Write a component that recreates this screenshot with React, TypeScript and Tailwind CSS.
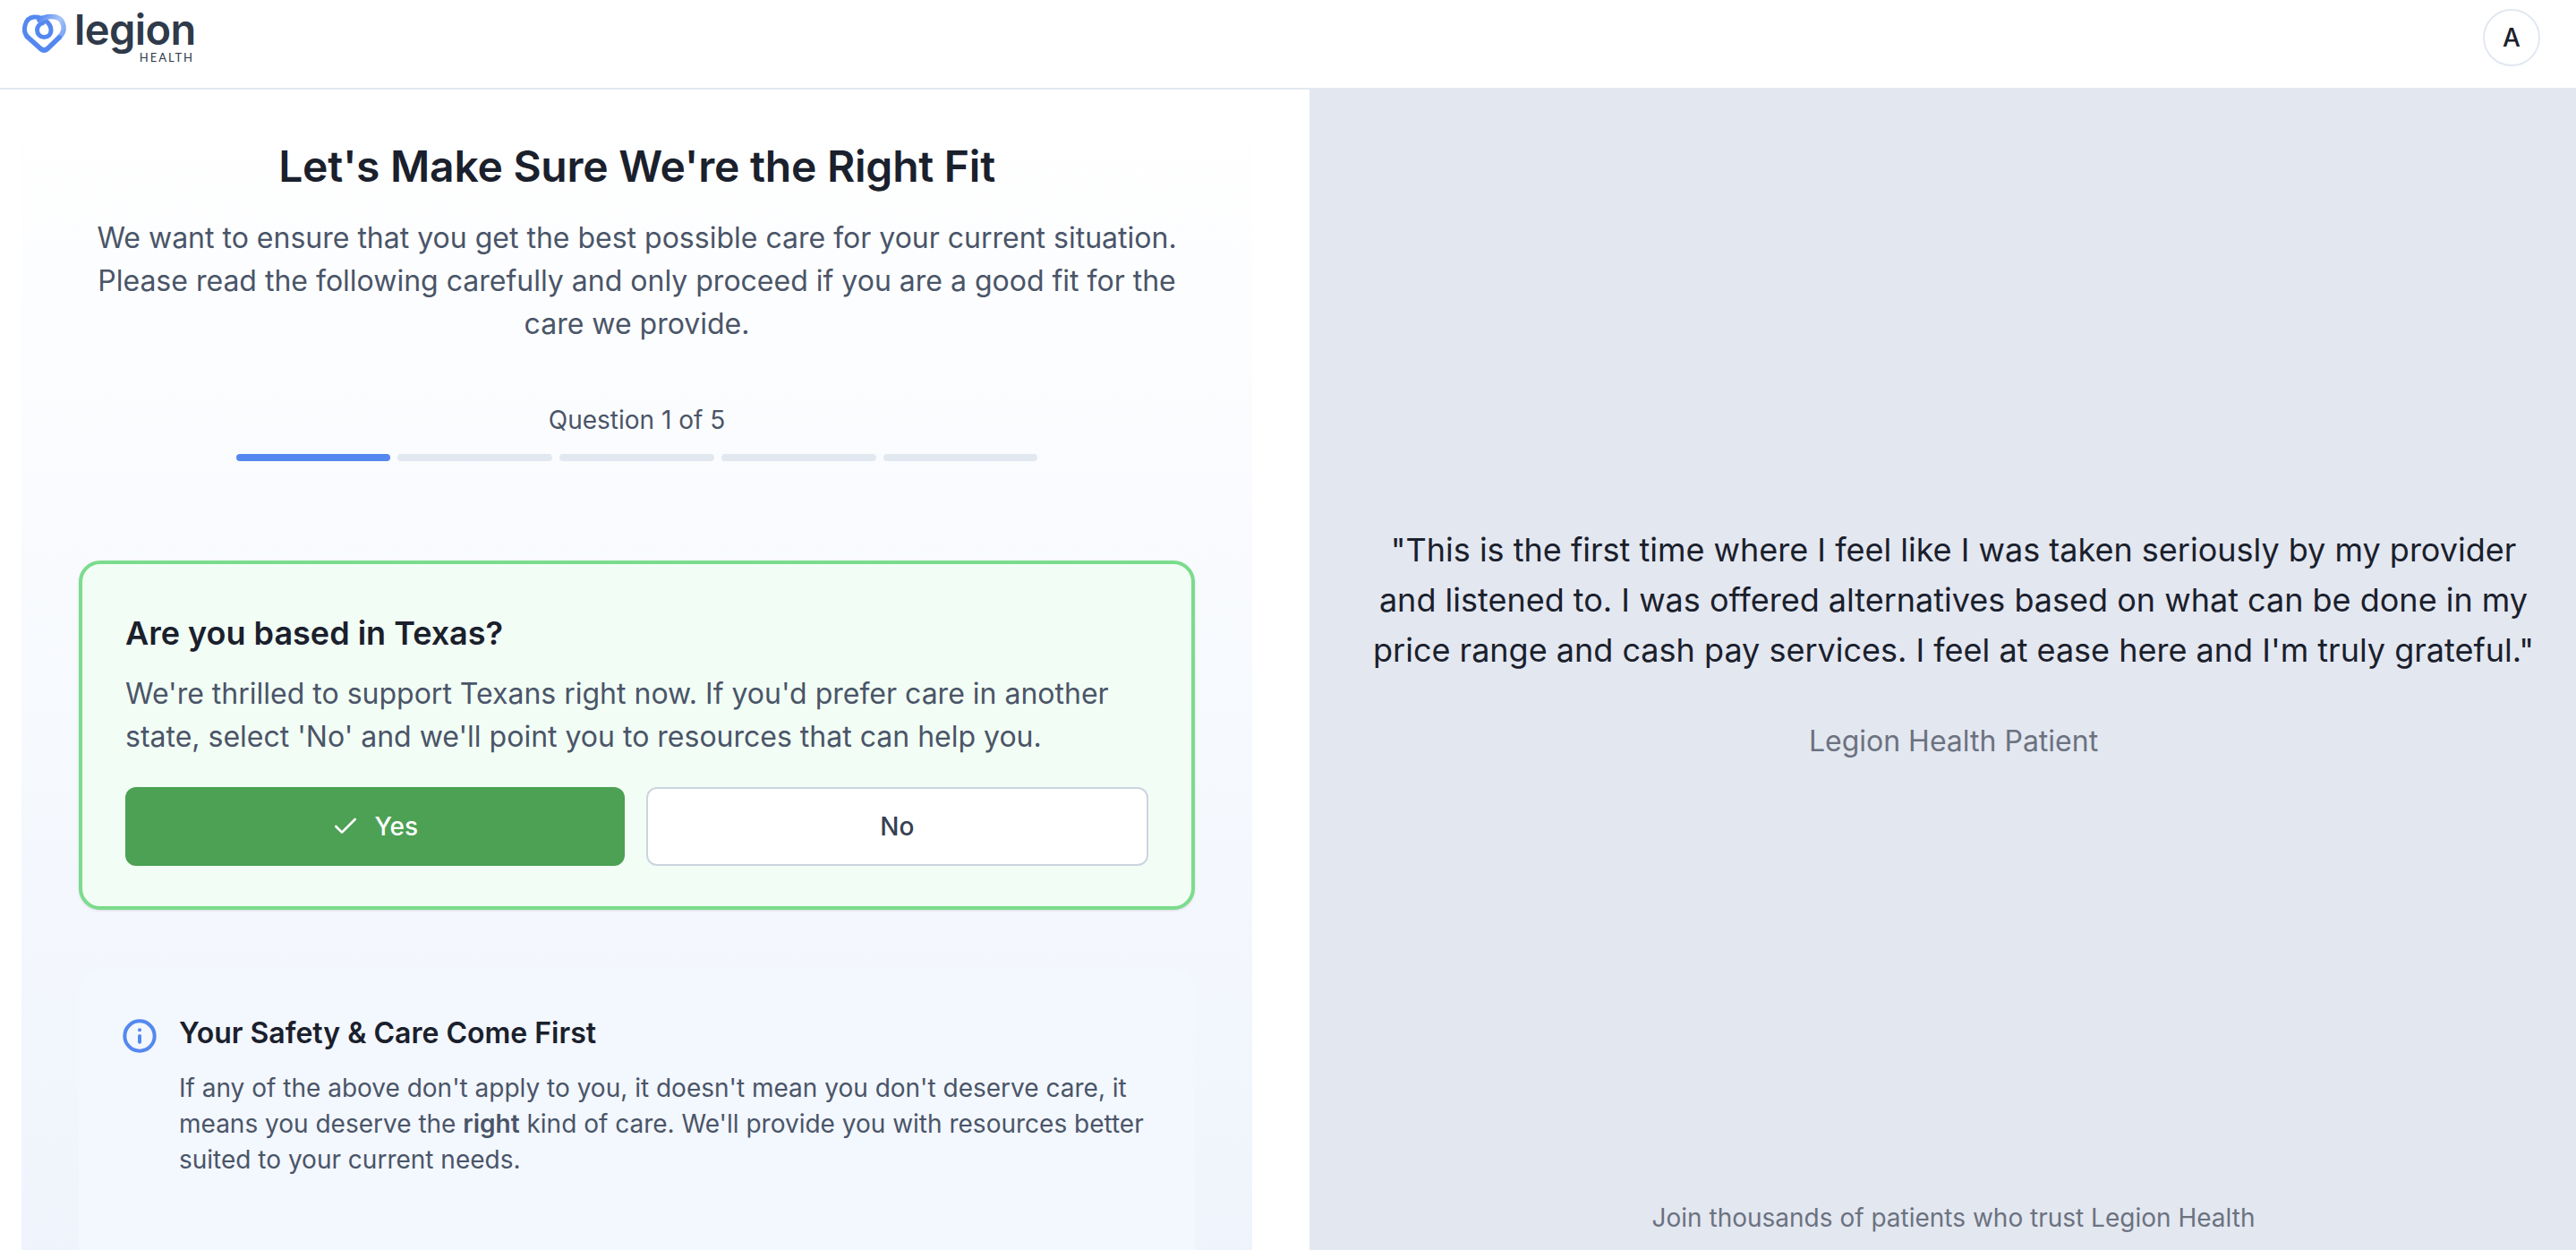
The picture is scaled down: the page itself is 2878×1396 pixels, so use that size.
import { Check, Info } from "lucide-react";

const steps = [true, false, false, false, false];

function Logo() {
  return (
    <div className="flex items-start">
      <svg width="52" height="46" viewBox="0 0 52 46" fill="none" className="mt-[15px] ml-[24px]">
        <defs>
          <linearGradient id="lobe" x1="20" y1="4" x2="48" y2="22" gradientUnits="userSpaceOnUse">
            <stop offset="0" stopColor="#5488f0" />
            <stop offset="0.6" stopColor="#a9c4f5" />
            <stop offset="1" stopColor="#7ea5f2" />
          </linearGradient>
        </defs>
        <path
          d="M6.5 26 C1 20 3 5 14 4 C24 3.5 33 11 33 18.5 C33 23.5 29.5 26.5 25.3 26.5 C21 26.5 17.5 23 17.5 18.5 C17.5 14.5 20.5 11.5 24 10.5"
          stroke="#5488f0"
          strokeWidth="5"
          strokeLinecap="round"
        />
        <path
          d="M20 7.5 C25 3.5 33 3 38 4 C45 5.5 47.5 12 47 18 C46.5 22 44.5 24.5 42 27"
          stroke="url(#lobe)"
          strokeWidth="5.6"
          strokeLinecap="round"
        />
        <path
          d="M6.5 26 L21.5 39.5 Q25.3 42.5 29 39.5 L42 27"
          stroke="#5488f0"
          strokeWidth="5.6"
          strokeLinecap="round"
          strokeLinejoin="round"
        />
      </svg>
      <div className="ml-[7px] relative w-[134px] h-[70px]">
        <span className="absolute left-0 top-[9px] font-semibold text-[47px] leading-[48px] tracking-[-0.6px] text-[#2f3a4a]">
          legion
        </span>
        <span className="absolute right-0 top-[58px] font-['Lato'] text-[13px] leading-[12px] tracking-[2px] text-[#2f3a4a]">
          HEALTH
        </span>
      </div>
    </div>
  );
}

export default function App() {
  return (
    <div className="h-[1396px] overflow-hidden bg-white font-['Inter',sans-serif]">
      <header className="h-[100px] border-b-2 border-[#e2e8f0] flex justify-between items-start pr-[40px] bg-white">
        <Logo />
        <div className="mt-[10px] w-[64px] h-[64px] rounded-full border-2 border-[#e2e8f0] flex items-center justify-center text-[28px] font-medium text-[#1a202c]">
          A
        </div>
      </header>

      <div className="flex h-[1296px]">
        <div className="w-[1463px] pl-[24px] pr-[64px]">
          <div className="h-full px-[64px] pt-[56px] bg-gradient-to-b from-white to-[#eff4fc]">
            <div className="text-center">
              <h1 className="text-[48px] leading-[60px] font-semibold tracking-[-0.24px] text-[#1a202c]">
                Let's Make Sure We're the Right Fit
              </h1>
              <p className="mt-[26px] text-[32px] leading-[48px] text-[#4a5568]">
                We want to ensure that you get the best possible care for your current situation.
                <br />
                Please read the following carefully and only proceed if you are a good fit for the
                <br />
                care we provide.
              </p>
            </div>

            <div className="mt-[63px] flex flex-col items-center">
              <p className="text-[28px] leading-[40px] text-[#4a5568]">Question 1 of 5</p>
              <div className="mt-[18px] w-[896px] flex gap-2">
                {steps.map((on, i) => (
                  <div
                    key={i}
                    className={`h-[8px] flex-1 rounded-full ${on ? "bg-[#5488f0]" : "bg-[#e2e8f0]"}`}
                  />
                ))}
              </div>
            </div>

            <div className="mt-[111px] h-[390px] rounded-[24px] border-4 border-[#7bdc8c] bg-[#f2fdf5] px-[48px] pt-[53px] shadow-sm">
              <h2 className="text-[36px] leading-[48px] font-semibold text-[#1a202c]">
                Are you based in Texas?
              </h2>
              <p className="mt-[20px] text-[32px] leading-[48px] text-[#4a5568]">
                We're thrilled to support Texans right now. If you'd prefer care in another
                <br />
                state, select 'No' and we'll point you to resources that can help you.
              </p>
              <div className="mt-[32px] flex gap-6">
                <button className="flex-1 h-[88px] rounded-[12px] bg-[#4ca154] text-white text-[28px] font-medium flex items-center justify-center gap-[16px]">
                  <Check size={32} strokeWidth={2} />
                  Yes
                </button>
                <button className="flex-1 h-[88px] rounded-[12px] bg-white border-2 border-[#cbd5e0] text-[#374151] text-[28px] font-medium">
                  No
                </button>
              </div>
            </div>

            <div className="mt-[66px] h-[360px] rounded-[24px] bg-[#f3f7fe] px-[48px] pt-[52px] flex gap-[24px]">
              <Info size={40} strokeWidth={2.4} className="text-[#5488f0] mt-[3px] shrink-0" />
              <div>
                <h3 className="text-[32px] leading-[40px] font-semibold text-[#1a202c]">
                  Your Safety &amp; Care Come First
                </h3>
                <p className="mt-[21px] text-[28px] leading-[40px] text-[#4a5568]">
                  If any of the above don't apply to you, it doesn't mean you don't deserve care, it
                  <br />
                  means you deserve the <strong className="font-semibold">right</strong> kind of care. We'll provide you with resources better
                  <br />
                  suited to your current needs.
                </p>
              </div>
            </div>
          </div>
        </div>

        <div className="flex-1 bg-[#e3e7f0] flex flex-col items-center pl-[24px] pt-[486px] pb-[16px]">
          <p className="text-center text-[36px] leading-[56px] text-[#1a202c]">
            "This is the first time where I feel like I was taken seriously by my provider
            <br />
            and listened to. I was offered alternatives based on what can be done in my
            <br />
            price range and cash pay services. I feel at ease here and I'm truly grateful."
          </p>
          <p className="mt-[50px] text-[32px] leading-[48px] text-[#6b7280]">Legion Health Patient</p>
          <p className="mt-auto text-[28px] leading-[40px] text-[#6b7280]">
            Join thousands of patients who trust Legion Health
          </p>
        </div>
      </div>
    </div>
  );
}
